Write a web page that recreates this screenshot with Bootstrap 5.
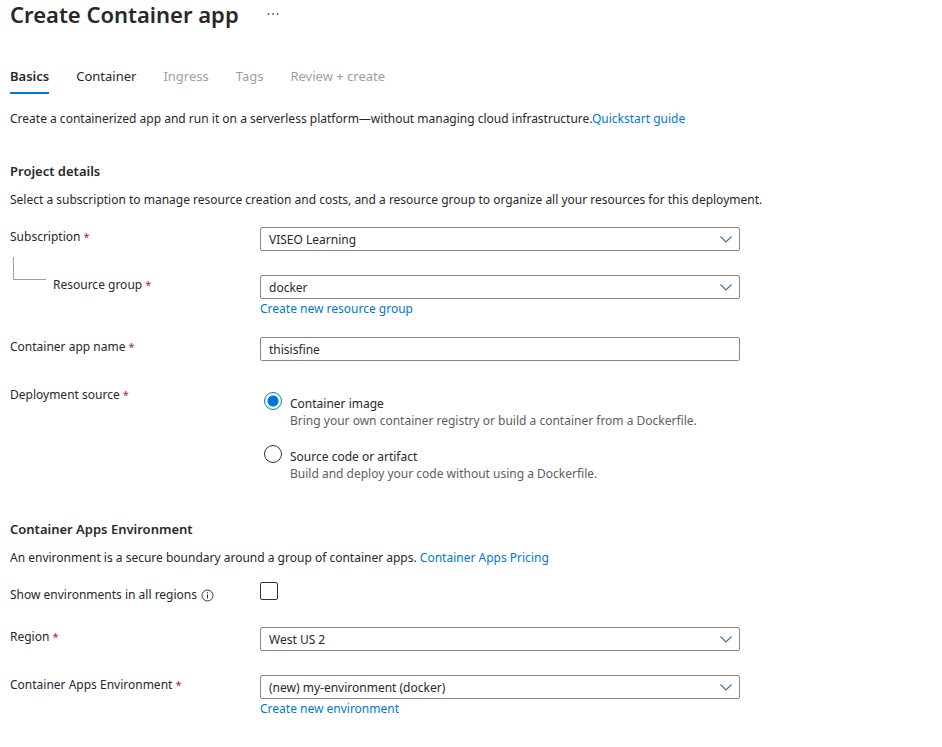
<!DOCTYPE html>
<html lang="en">
<head>
<meta charset="utf-8">
<meta name="viewport" content="width=device-width, initial-scale=1">
<title>Create Container app</title>
<link href="https://cdn.jsdelivr.net/npm/bootstrap@5.3.0/dist/css/bootstrap.min.css" rel="stylesheet">
<style>
:root { --ink: #292827; --azure: #0078d4; --field: #8a8886; }
body { font: 12px/20px "Noto Sans", sans-serif; color: var(--ink); background: #fff; }
a { color: var(--azure); text-decoration: none; }
.page { padding: 0 10px 24px; }
.title-bar { gap: 27px; }
.page-title { font-size: 22px; line-height: 28px; font-weight: 600; }
.more-btn { border: 0; background: none; color: #605e5c; line-height: 0; padding: 0; }
.wizard-tabs { margin-top: 39px; gap: 27px; font-size: 13px; line-height: 18px; }
.wizard-tabs .nav-link { padding: 0 0 7px; border-bottom: 2px solid transparent; color: var(--ink); }
.wizard-tabs .nav-link.active { font-weight: 600; border-color: var(--azure); }
.wizard-tabs .nav-link.disabled { color: #a19f9d; }
.intro { margin-top: 15px; }
.section-title { font-size: 13px; line-height: 18px; font-weight: 600; margin: 33px 0 10px; }
.section-title.second { margin-top: 38px; }
.fields { margin-top: 17px; }
.field-row { display: grid; grid-template-columns: 250px minmax(0, 480px); margin-bottom: 24px; }
.field-row.linked { margin-bottom: 18px; }
.req { color: #a4262c; font-size: 11px; }
.branch { width: 33px; height: 23px; margin: -18px 7px 0 3px; border: solid #a19f9d; border-width: 0 0 1px 1px; }
.field-row .form-select, .field-row .form-control { height: 24px; padding: 1px 8px 0; border: 1px solid var(--field); border-radius: 2px; font-size: 12px; line-height: 22px; color: var(--ink); }
.field-row .form-select { padding-right: 28px; background-size: 14px 8px; background-position: right 6px center; background-image: url("data:image/svg+xml,%3Csvg xmlns='http://www.w3.org/2000/svg' viewBox='0 0 14 8'%3E%3Cpath d='M1.500 1.500 7 7 12.500 1.500' fill='none' stroke='%233a6ea5' stroke-width='1.100'/%3E%3C/svg%3E"); }
.choices { padding-top: 7px; display: grid; gap: 16px; }
.choice { display: flex; gap: 8px; padding-left: 4px; line-height: 17px; }
.choice-text { padding-top: 3px; }
.choice-note { color: #605e5c; }
.pick { appearance: none; flex: none; width: 18px; height: 18px; margin: 0; border: 1px solid #323130; background: #fff; border-radius: 2px; }
.pick[type=radio] { border-radius: 50%; }
.pick[type=radio]:checked { border-color: var(--azure); background: radial-gradient(circle, var(--azure) 5px, #fff 6px); }
.check-fields { margin-top: 14px; }
.field-row.check-row { margin-bottom: 22px; }
.check-row .field-label { padding-top: 3px; }
.info { width: 13px; height: 13px; }
</style>
<script src="https://cdn.jsdelivr.net/npm/bootstrap@5.3.0/dist/js/bootstrap.bundle.min.js"></script>
</head>
<body>
<main class="page">
  <header class="title-bar d-flex align-items-center">
    <h1 class="page-title mb-0">Create Container app</h1>
    <button class="more-btn" type="button" aria-label="More actions">
      <svg width="14" height="4" viewBox="0 0 14 4" fill="currentColor" aria-hidden="true"><circle cx="2.500" cy="2" r=".9"/><circle cx="7" cy="2" r=".9"/><circle cx="11.500" cy="2" r=".9"/></svg>
    </button>
  </header>
  <nav class="nav wizard-tabs" aria-label="Steps">
    <a class="nav-link active" href="#" aria-current="page">Basics</a>
    <a class="nav-link" href="#">Container</a>
    <a class="nav-link disabled" href="#" aria-disabled="true">Ingress</a>
    <a class="nav-link disabled" href="#" aria-disabled="true">Tags</a>
    <a class="nav-link disabled" href="#" aria-disabled="true">Review + create</a>
  </nav>
  <p class="intro mb-0">Create a containerized app and run it on a serverless platform—without managing cloud infrastructure.<a href="#">Quickstart guide</a></p>

  <form>
    <h2 class="section-title">Project details</h2>
    <p class="mb-0">Select a subscription to manage resource creation and costs, and a resource group to organize all your resources for this deployment.</p>
    <div class="fields">
      <div class="field-row">
        <label for="subscription">Subscription <span class="req">*</span></label>
        <select class="form-select" id="subscription"><option>VISEO Learning</option></select>
      </div>
      <div class="field-row linked">
        <div class="d-flex align-items-start">
          <span class="branch" aria-hidden="true"></span>
          <label for="group">Resource group <span class="req">*</span></label>
        </div>
        <div>
          <select class="form-select" id="group"><option>docker</option></select>
          <a class="d-block" href="#">Create new resource group</a>
        </div>
      </div>
      <div class="field-row">
        <label for="appname">Container app name <span class="req">*</span></label>
        <input class="form-control" id="appname" type="text" value="thisisfine">
      </div>
      <div class="field-row mb-0" role="radiogroup" aria-labelledby="source">
        <span id="source">Deployment source <span class="req">*</span></span>
        <div class="choices">
          <div class="choice">
            <input class="pick" type="radio" name="source" id="image" checked>
            <label class="choice-text" for="image">Container image<span class="choice-note d-block">Bring your own container registry or build a container from a Dockerfile.</span></label>
          </div>
          <div class="choice">
            <input class="pick" type="radio" name="source" id="code">
            <label class="choice-text" for="code">Source code or artifact<span class="choice-note d-block">Build and deploy your code without using a Dockerfile.</span></label>
          </div>
        </div>
      </div>
    </div>

    <h2 class="section-title second">Container Apps Environment</h2>
    <p class="mb-0">An environment is a secure boundary around a group of container apps. <a href="#">Container Apps Pricing</a></p>
    <div class="check-fields">
      <div class="field-row check-row">
        <div class="field-label d-flex align-items-center gap-1">
          <label for="allregions">Show environments in all regions</label>
          <svg class="info" viewBox="0 0 13 13" fill="none" stroke="#323130" role="img" aria-label="Info"><circle cx="6.500" cy="6.500" r="5.500"/><path d="M6.500 5.500v4M6.500 3.200v1.200"/></svg>
        </div>
        <input class="pick" type="checkbox" id="allregions">
      </div>
      <div class="field-row">
        <label for="region">Region <span class="req">*</span></label>
        <select class="form-select" id="region"><option>West US 2</option></select>
      </div>
      <div class="field-row mb-0">
        <label for="env">Container Apps Environment <span class="req">*</span></label>
        <div>
          <select class="form-select" id="env"><option>(new) my-environment (docker)</option></select>
          <a class="d-block" href="#">Create new environment</a>
        </div>
      </div>
    </div>
  </form>
</main>
</body>
</html>
